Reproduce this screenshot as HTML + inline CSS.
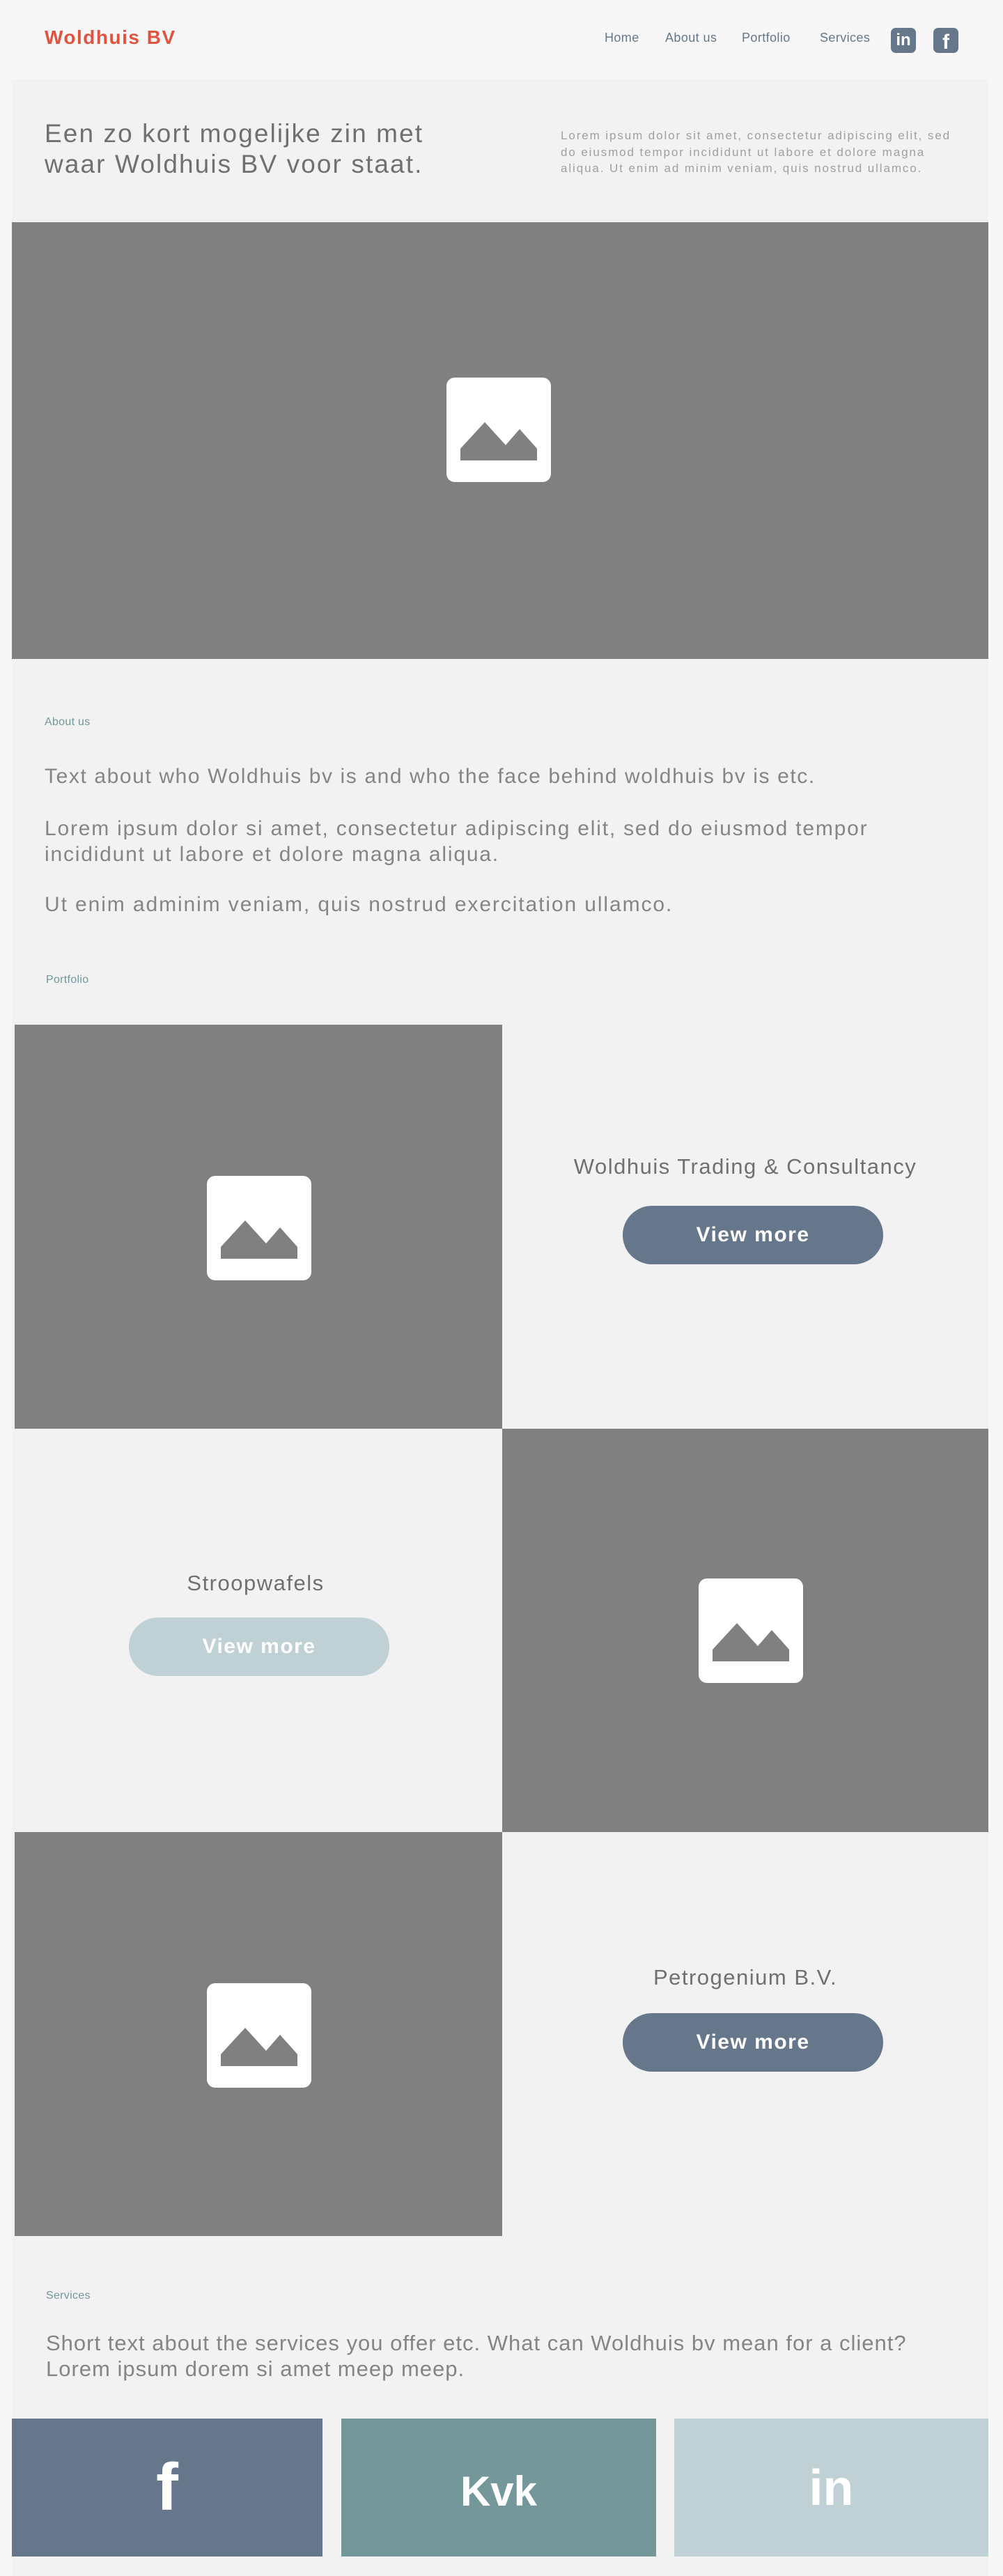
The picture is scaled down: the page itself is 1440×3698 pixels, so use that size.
<!DOCTYPE html>
<html><head><meta charset="utf-8"><style>
*{margin:0;padding:0;box-sizing:border-box}
body{width:1440px;height:3698px;background:#f7f7f7;font-family:"Liberation Sans",sans-serif;position:relative;overflow:hidden}
.a{position:absolute}
.main{left:17px;top:114px;width:1402px;height:3584px;background:#f2f2f2}
.grey{background:#808080}
.logo{left:64px;top:38px;font-size:28px;font-weight:bold;color:#e0533f;letter-spacing:1.5px}
.nav{top:44px;font-size:18px;color:#66778c;letter-spacing:0.4px}
.sico{top:40px;width:36px;height:36px;border-radius:7px;background:#66778c;color:#fff;font-weight:bold;text-align:center}
.lbl{font-size:16px;color:#72979a;letter-spacing:0.3px}
.txt{font-size:30px;color:#858585;letter-spacing:1.6px;white-space:nowrap}
.ttl{font-size:31px;color:#707070;text-align:center;width:698px;left:721px;letter-spacing:1.5px}
.btn{height:84px;border-radius:42px;color:#fff;font-weight:bold;font-size:30px;text-align:center;line-height:84px;width:374px;letter-spacing:1.5px}
.tile{top:3472px;height:198px;color:#fff;font-weight:bold;text-align:center}
</style></head><body>
<div class="a logo">Woldhuis BV</div>
<div class="a nav" style="left:868px">Home</div>
<div class="a nav" style="left:955px">About us</div>
<div class="a nav" style="left:1065px">Portfolio</div>
<div class="a nav" style="left:1177px">Services</div>
<div class="a sico" style="left:1279px;font-size:24px;line-height:36px">in</div>
<div class="a sico" style="left:1340px;font-size:30px;line-height:42px">f</div>

<div class="a main"></div>
<div class="a" style="left:64px;top:170px;font-size:37px;line-height:44px;color:#707070;letter-spacing:2.1px;white-space:nowrap">Een zo kort mogelijke zin met<br>waar Woldhuis BV voor staat.</div>
<div class="a" style="left:805px;top:183px;font-size:17px;line-height:23.5px;color:#a0a0a0;letter-spacing:1.9px;white-space:nowrap">Lorem ipsum dolor sit amet, consectetur adipiscing elit, sed<br>do eiusmod tempor incididunt ut labore et dolore magna<br>aliqua. Ut enim ad minim veniam, quis nostrud ullamco.</div>

<div class="a grey" style="left:17px;top:319px;width:1402px;height:627px"></div>
<svg class="a" style="left:641px;top:542px" width="150" height="150" viewBox="0 0 150 150"><rect width="150" height="150" rx="12" fill="#fff"/><polygon points="20,119 20,102 55,64 85,97 105,74 130,102 130,119" fill="#808080"/></svg>

<div class="a lbl" style="left:64px;top:1028px">About us</div>
<div class="a txt" style="left:64px;top:1098px">Text about who Woldhuis bv is and who the face behind woldhuis bv is etc.</div>
<div class="a txt" style="left:64px;top:1171px;line-height:37px;letter-spacing:1.8px">Lorem ipsum dolor si amet, consectetur adipiscing elit, sed do eiusmod tempor<br>incididunt ut labore et dolore magna aliqua.</div>
<div class="a txt" style="left:64px;top:1282px;letter-spacing:1.9px">Ut enim adminim veniam, quis nostrud exercitation ullamco.</div>
<div class="a lbl" style="left:66px;top:1398px">Portfolio</div>

<div class="a grey" style="left:21px;top:1471px;width:700px;height:580px"></div>
<svg class="a" style="left:297px;top:1688px" width="150" height="150" viewBox="0 0 150 150"><rect width="150" height="150" rx="12" fill="#fff"/><polygon points="20,119 20,102 55,64 85,97 105,74 130,102 130,119" fill="#808080"/></svg>
<div class="a ttl" style="top:1657px">Woldhuis Trading &amp; Consultancy</div>
<div class="a btn" style="left:894px;top:1731px;background:#66778c">View more</div>

<div class="a grey" style="left:721px;top:2051px;width:698px;height:579px"></div>
<svg class="a" style="left:1003px;top:2266px" width="150" height="150" viewBox="0 0 150 150"><rect width="150" height="150" rx="12" fill="#fff"/><polygon points="20,119 20,102 55,64 85,97 105,74 130,102 130,119" fill="#808080"/></svg>
<div class="a ttl" style="top:2255px;left:17px;width:700px">Stroopwafels</div>
<div class="a btn" style="left:185px;top:2322px;background:#bfd1d4">View more</div>

<div class="a grey" style="left:21px;top:2630px;width:700px;height:580px"></div>
<svg class="a" style="left:297px;top:2847px" width="150" height="150" viewBox="0 0 150 150"><rect width="150" height="150" rx="12" fill="#fff"/><polygon points="20,119 20,102 55,64 85,97 105,74 130,102 130,119" fill="#808080"/></svg>
<div class="a ttl" style="top:2821px">Petrogenium B.V.</div>
<div class="a btn" style="left:894px;top:2890px;background:#66778c">View more</div>

<div class="a lbl" style="left:66px;top:3287px">Services</div>
<div class="a txt" style="left:66px;top:3345px;line-height:37px;font-size:31px;letter-spacing:1.0px">Short text about the services you offer etc. What can Woldhuis bv mean for a client?<br>Lorem ipsum dorem si amet meep meep.</div>

<div class="a tile" style="left:17px;width:446px;background:#66778c;font-size:96px;line-height:198px">f</div>
<div class="a tile" style="left:490px;width:452px;background:#74979a;font-size:60px;line-height:210px">Kvk</div>
<div class="a tile" style="left:968px;width:451px;background:#bfd1d4;font-size:72px;line-height:200px">in</div>
</body></html>
